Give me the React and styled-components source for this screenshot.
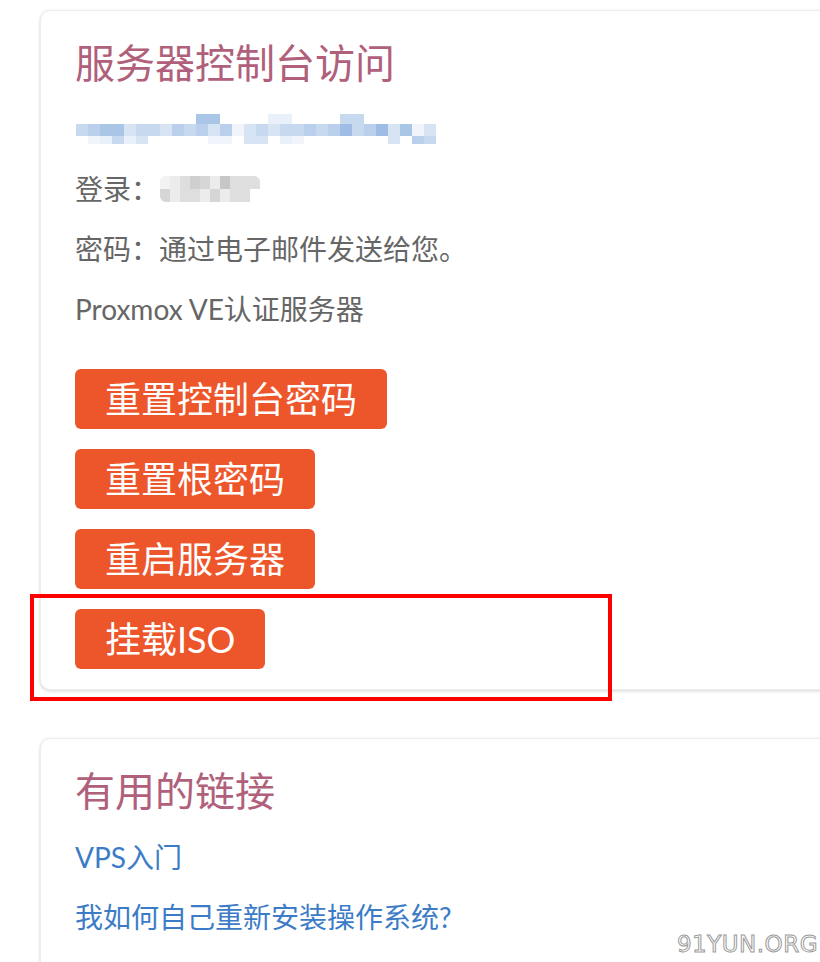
import React from "react"
import styled, { createGlobalStyle } from "styled-components"

const Global = createGlobalStyle`
  html, body {
    margin: 0;
    padding: 0;
    background: #fff;
    height: 962px;
    overflow: hidden;
  }
  body {
    font-family: "Lato", "Noto Sans CJK SC", sans-serif;
  }
`

const Page = styled.div`
  position: relative;
  height: 962px;
  padding: 10px 0 0 40px;
  box-sizing: border-box;
  overflow: hidden;
`

const Card = styled.section`
  display: flex;
  flex-direction: column;
  margin-right: -40px;
  margin-top: ${p => p.$top || 0}px;
  padding: 28px 34px ${p => p.$bottom || 20}px 34px;
  background: #fff;
  border: 1px solid #ececec;
  border-radius: 10px;
  box-shadow: 0 2px 3px rgba(0, 0, 0, 0.1), -1px 0 3px rgba(0, 0, 0, 0.05);
`

const Title = styled.h2`
  margin: 0 0 22px;
  font-weight: 400;
  font-size: 40px;
  line-height: 48px;
  color: #b0607a;
`

const Lines = styled.div`
  display: flex;
  flex-direction: column;
  gap: 20px;
`

const Line = styled.p`
  display: flex;
  align-items: center;
  margin: 0;
  height: 40px;
  font-size: 28px;
  line-height: 40px;
  color: ${p => (p.$link ? "#3c7cc6" : "#666")};
  white-space: nowrap;
`

const Buttons = styled.div`
  display: flex;
  flex-direction: column;
  align-items: flex-start;
  gap: 20px;
  margin-top: 40px;
`

const Button = styled.button`
  height: 60px;
  padding: 0 30px;
  border: none;
  border-radius: 6px;
  background: #ed552a;
  color: #fff;
  font-family: "Lato", "Noto Sans CJK SC", sans-serif;
  font-size: 36px;
  line-height: 60px;
  cursor: pointer;
`

const Mosaic = styled.span`
  display: grid;
  grid-template-columns: repeat(${p => p.$cols}, ${p => p.$w}px);
  grid-auto-rows: auto;
  margin-left: ${p => p.$left || 0}px;
  border-radius: ${p => p.$round || 0}px;
  overflow: hidden;
`

const Cell = styled.span`
  display: block;
  height: ${p => p.$h}px;
`

const Highlight = styled.div`
  position: absolute;
  left: 30px;
  top: 594px;
  width: 574px;
  height: 99px;
  border: 4px solid #ff0000;
  pointer-events: none;
`

const Watermark = styled.div`
  position: absolute;
  right: 2px;
  top: 931px;
  font-family: "DejaVu Sans", sans-serif;
  font-size: 23px;
  letter-spacing: 0.5px;
  color: #fff;
  -webkit-text-stroke: 1px #9a9a9a;
`

const B = ["", "#e8f0f9", "#c6d9ef", "#aac6e7", "#d6e4f4", "#b9cfec", "#9fbde4", "#f1f5fb"]
const linkRows = [
  { h: 10, cells: "000000000033000011000022000000" },
  { h: 12, cells: "253342245254574242252562564374" },
  { h: 8, cells: "071214000007704401700000004052" },
]

const G = ["", "#ececec", "#d6d6d6", "#c6c6c6", "#dedede", "#f2f2f2", "#cfcfcf"]
const grayRows = [
  { h: 13, cells: "5146213444" },
  { h: 13, cells: "2144121440" },
]

const Pixels = ({ rows, palette, w, left, round }) => (
  <Mosaic $cols={rows[0].cells.length} $w={w} $left={left} $round={round}>
    {rows.map((r, i) =>
      r.cells.split("").map((c, j) => (
        <Cell key={`${i}-${j}`} $h={r.h} style={{ background: palette[+c] || "transparent" }} />
      ))
    )}
  </Mosaic>
)

const actions = ["重置控制台密码", "重置根密码", "重启服务器", "挂载ISO"]

export default function App() {
  return (
    <>
      <Global />
      <Page>
        <Card>
          <Title>服务器控制台访问</Title>
          <Lines>
            <Line $link>
              <Pixels rows={linkRows} palette={B} w={12} left={1} />
            </Line>
            <Line>
              登录：
              <Pixels rows={grayRows} palette={G} w={10} left={1} round={6} />
            </Line>
            <Line>密码：通过电子邮件发送给您。</Line>
            <Line>Proxmox VE认证服务器</Line>
          </Lines>
          <Buttons>
            {actions.map(a => (
              <Button key={a}>{a}</Button>
            ))}
          </Buttons>
        </Card>

        <Card $top={48} $bottom={80}>
          <Title>有用的链接</Title>
          <Lines>
            <Line $link>VPS入门</Line>
            <Line $link>我如何自己重新安装操作系统?</Line>
          </Lines>
        </Card>

        <Highlight />
        <Watermark>91YUN.ORG</Watermark>
      </Page>
    </>
  )
}
